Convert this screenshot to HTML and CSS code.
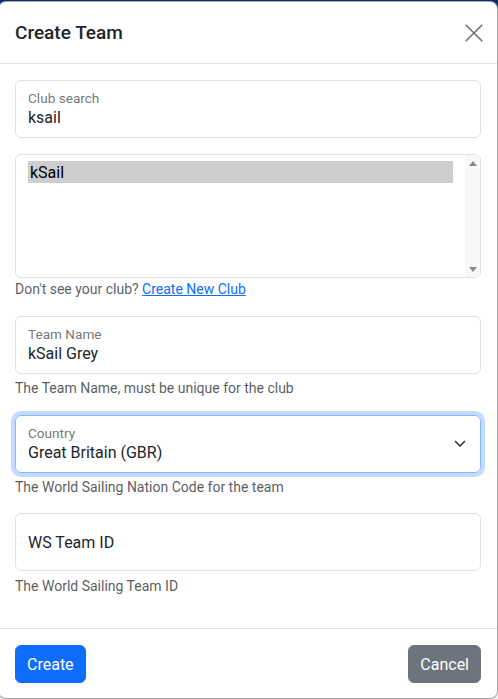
FILE: index.html
```html
<!DOCTYPE html>
<html lang="en">
<head>
<meta charset="utf-8">
<title>Create Team</title>
<link rel="stylesheet" href="styles.css">
</head>
<body>
<div class="modal">
  <div class="modal-header">
    <h5 class="modal-title">Create Team</h5>
    <button class="btn-close" aria-label="Close">
      <svg width="18" height="18" viewBox="0 0 18 18"><path d="M0.7 0.7L17.3 17.3M17.3 0.7L0.7 17.3" stroke="#727272" stroke-width="1.6" fill="none"/></svg>
    </button>
  </div>
  <div class="modal-body">
    <div class="floating mb">
      <span class="float-label">Club search</span>
      <span class="float-value">ksail</span>
    </div>
    <div class="listbox">
      <div class="options">
        <div class="option selected">kSail</div>
      </div>
      <div class="scrollbar"><span class="arrow-up"></span><span class="arrow-down"></span></div>
    </div>
    <div class="form-text club-text mb">Don't see your club? <a href="#">Create New Club</a></div>

    <div class="floating">
      <span class="float-label">Team Name</span>
      <span class="float-value">kSail Grey</span>
    </div>
    <div class="form-text mb">The Team Name, must be unique for the club</div>

    <div class="floating select focus">
      <div class="float-text">
        <span class="float-label">Country</span>
        <span class="float-value">Great Britain (GBR)</span>
      </div>
      <svg class="chevron" width="12" height="7" viewBox="0 0 12 7"><path d="M1 1L6 6L11 1" stroke="#343a40" stroke-width="1.6" fill="none"/></svg>
    </div>
    <div class="form-text mb-country">The World Sailing Nation Code for the team</div>

    <div class="floating empty">
      <span class="empty-label">WS Team ID</span>
    </div>
    <div class="form-text ws-text">The World Sailing Team ID</div>
  </div>
  <div class="modal-footer">
    <button class="btn btn-primary">Create</button>
    <button class="btn btn-secondary">Cancel</button>
  </div>
</div>
</body>
</html>
```
FILE: styles.css
```css
html, body {
  margin: 0;
  height: 100%;
}

body {
  background: linear-gradient(#0b2d69 0, #0b2d69 20px, #f1f1f1 20px);
  font-family: Roboto, "Noto Sans", sans-serif;
  color: #212529;
  overflow: hidden;
}

.modal {
  box-sizing: border-box;
  width: 500px;
  height: 698px;
  margin: 1px 0 0 -2px;
  background: #fff;
  border: 1px solid rgba(0, 0, 0, 0.35);
  border-radius: 8px;
  display: flex;
  flex-direction: column;
}

.modal-header {
  display: flex;
  align-items: center;
  justify-content: space-between;
  padding: 19px 14px 18px 16px;
  border-bottom: 1px solid #dee2e6;
}

.modal-title {
  margin: 0;
  font-size: 19px;
  font-weight: 500;
  line-height: 24px;
}

.btn-close {
  border: none;
  background: none;
  padding: 0;
  width: 18px;
  height: 18px;
  display: block;
}

.btn-close svg {
  display: block;
}

.modal-body {
  flex: 1;
  padding: 16px 16px 15px;
}

.mb {
  margin-bottom: 16px;
}

.mb-country {
  margin-bottom: 15px;
}

.floating {
  box-sizing: border-box;
  height: 58px;
  border: 1px solid #dee2e6;
  border-radius: 6px;
  padding: 9px 12px 0;
  display: flex;
  flex-direction: column;
}

.float-label {
  font-size: 13.6px;
  line-height: 16px;
  color: rgba(33, 37, 41, 0.65);
}

.float-value {
  font-size: 16px;
  line-height: 24px;
}

.float-text {
  display: flex;
  flex-direction: column;
}

.select {
  flex-direction: row;
  justify-content: space-between;
  padding-right: 14px;
}

.focus {
  border-color: #86b7fe;
  box-shadow: 0 0 0 4px rgba(13, 110, 253, 0.25);
}

.chevron {
  align-self: center;
  margin-bottom: 10px;
  display: block;
}

.empty {
  justify-content: center;
  padding-top: 2px;
}

.empty-label {
  font-size: 16px;
  line-height: 24px;
  color: #212529;
}

.listbox {
  box-sizing: border-box;
  height: 124px;
  border: 1px solid #dee2e6;
  border-radius: 6px;
  display: flex;
  overflow: hidden;
}

.options {
  flex: 1;
  padding: 6px 12px 0;
}

.option {
  box-sizing: border-box;
  height: 22px;
  padding: 2px 2px 0;
  font-size: 16px;
  line-height: 20px;
  color: #000;
}

.selected {
  background: #cecece;
}

.scrollbar {
  width: 15px;
  background: #f8f8f8;
  display: flex;
  flex-direction: column;
  justify-content: space-between;
  align-items: center;
  padding: 6px 0 5px;
  box-sizing: border-box;
}

.arrow-up {
  width: 0;
  height: 0;
  border-left: 4.5px solid transparent;
  border-right: 4.5px solid transparent;
  border-bottom: 5px solid #8a8a8a;
}

.arrow-down {
  width: 0;
  height: 0;
  border-left: 4.5px solid transparent;
  border-right: 4.5px solid transparent;
  border-top: 5px solid #8a8a8a;
}

.form-text {
  font-size: 14px;
  line-height: 21px;
  margin-top: 4px;
  color: rgba(33, 37, 41, 0.75);
}

.club-text {
  margin-top: 1px;
}

.ws-text {
  margin-top: 5px;
}

.form-text a {
  color: #0d6efd;
  text-decoration: underline;
}

.modal-footer {
  border-top: 1px solid #dee2e6;
  padding: 16px 16px 15px;
  display: flex;
  justify-content: space-between;
}

.btn {
  font-family: Roboto, "Noto Sans", sans-serif;
  font-size: 16px;
  line-height: 24px;
  padding: 7px 11px 5px;
  border: 1px solid;
  border-radius: 6px;
  color: #fff;
}

.btn-primary {
  background: #0d6efd;
  border-color: #0d6efd;
}

.btn-secondary {
  background: #6c757d;
  border-color: #6c757d;
}
```
